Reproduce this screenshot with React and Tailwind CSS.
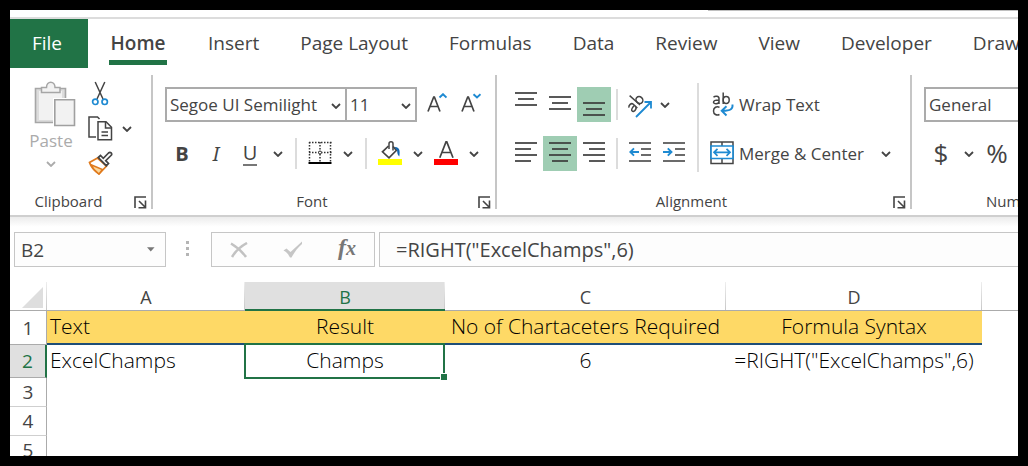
import React from "react";

const TABS = ["Home", "Insert", "Page Layout", "Formulas", "Data", "Review", "View", "Developer", "Draw"];

function Chevron({ className = "" }) {
  return (
    <svg width="10" height="6" viewBox="0 0 10 6" fill="none" stroke="currentColor" strokeWidth="1.8" className={className} aria-hidden="true">
      <path d="M1 1l4 4 4-4" />
    </svg>
  );
}

function Tool({ label, active, children }) {
  return (
    <button type="button" aria-label={label} aria-pressed={active ? true : undefined} className={`flex h-[35px] w-[34px] shrink-0 items-center justify-center ${active ? "bg-[#9fcdb3]" : ""}`}>
      {children}
    </button>
  );
}

function More({ label }) {
  return (
    <button type="button" aria-label={label} className="flex h-[35px] w-[22px] shrink-0 items-center justify-center">
      <Chevron />
    </button>
  );
}

function Rule({ className = "" }) {
  return <div className={`h-[31px] w-0.5 shrink-0 bg-[#dcdcdc] ${className}`} />;
}

function Launcher({ label }) {
  return (
    <button type="button" aria-label={label} className="absolute right-1 bottom-0">
      <svg width="13" height="13" viewBox="0 0 13 13" fill="none" stroke="#444" strokeWidth="1.6" aria-hidden="true">
        <path d="M1 12V1h11" />
        <path d="M5 5l6 6M11.5 4.500v7.200H4.500" />
      </svg>
    </button>
  );
}

function Group({ name, className = "", launcher = true, children }) {
  return (
    <section aria-label={name} className={`relative flex h-[134px] shrink-0 flex-col border-r-2 border-[#c6c6c6] ${className}`}>
      <div className="flex-1">{children}</div>
      <div className={`text-center text-[15px] leading-4 ${launcher ? "pr-6" : ""}`}>{name}</div>
      {launcher && <Launcher label={`${name} settings`} />}
    </section>
  );
}

function Combo({ label, value, className }) {
  return (
    <div className={`relative h-[35px] border-2 border-[#ababab] ${className}`}>
      <select aria-label={label} defaultValue={value} className="h-full w-full appearance-none bg-white pl-[3px] text-[17px] text-[#444] outline-none">
        <option>{value}</option>
      </select>
      <Chevron className="pointer-events-none absolute top-3.5 right-1" />
    </div>
  );
}

function Lines({ rows }) {
  return (
    <svg width="22" height="25" viewBox="0 0 22 25" stroke="#3b3b3b" strokeWidth="1.7" aria-hidden="true">
      {rows.map(([x1, x2, y]) => (
        <path key={y} d={`M${x1} ${y}H${x2}`} />
      ))}
    </svg>
  );
}

function PasteIcon() {
  return (
    <svg width="42" height="46" viewBox="0 0 42 46" fill="none" aria-hidden="true">
      <path d="M1.500 7.500h30v34h-30z" fill="#dcdcdc" stroke="#a6a6a6" strokeWidth="1.600" />
      <path d="M5 10h23v29H5z" fill="#f2f2f2" />
      <path d="M7.500 11.500v-5h5c0-7 8.500-7 8.500 0h5v5z" fill="#f2f2f2" stroke="#a6a6a6" strokeWidth="1.500" />
      <path d="M19 17h23v29H19z" fill="#fff" />
      <path d="M20.800 18.800h19.700v25.700H20.800z" fill="#f2f2f2" stroke="#a0a0a0" strokeWidth="1.600" />
    </svg>
  );
}

function CutIcon() {
  return (
    <svg width="18" height="25" viewBox="0 0 18 25" fill="none" aria-hidden="true">
      <path d="M4.200 1l7.800 17M13.800 1L6 18" stroke="#444" strokeWidth="1.500" />
      <circle cx="4.300" cy="20.800" r="2.700" stroke="#1e8ad2" strokeWidth="1.700" />
      <circle cx="13.700" cy="20.800" r="2.700" stroke="#1e8ad2" strokeWidth="1.700" />
    </svg>
  );
}

function CopyIcon() {
  return (
    <svg width="25" height="25" viewBox="0 0 25 25" fill="none" stroke="#444" strokeWidth="1.500" aria-hidden="true">
      <path d="M8 21H1V1h8.500l2 2" />
      <path d="M10 5.800h8l5.500 5.500v12.500H10z" fill="#fff" />
      <path d="M17.500 6v6h6M13.500 16h6.500M13.500 19.500h6.500" />
    </svg>
  );
}

function BrushIcon() {
  return (
    <svg width="25" height="25" viewBox="0 0 25 25" fill="none" aria-hidden="true">
      <path d="M9.500 7L1.500 11.500C3 16 6.500 20 11 23l7.500-8z" fill="#fff" stroke="#e07a1c" strokeWidth="1.700" />
      <path d="M3 13.800l11.500 4.700L11 23c-3.500-2.500-6.200-5.500-8-9.200z" fill="#fbd79b" stroke="#e07a1c" strokeWidth="1.500" />
      <path d="M10.300 6.500l2.200-2 2.800 2.800L20.500 2c2-1.800 4.200.8 2.500 2.500l-5.300 5.200 2.800 2.800-2.200 2.200z" fill="#fff" stroke="#444" strokeWidth="1.700" />
    </svg>
  );
}

function BordersIcon() {
  return (
    <svg width="24" height="25" viewBox="0 0 24 25" fill="none" stroke="#333" aria-hidden="true">
      <path d="M1 1.500h23M1 11.500h23" strokeWidth="1.500" strokeDasharray="1.500 1.500" />
      <path d="M1.500 1v20M12 1v20M22.500 1v20" strokeWidth="1.500" strokeDasharray="1.500 1.500" />
      <circle cx="12" cy="11.500" r="1.500" fill="#fff" strokeWidth="1" />
      <path d="M.5 22h23" stroke="#000" strokeWidth="2" />
    </svg>
  );
}

function FillIcon() {
  return (
    <svg width="24" height="25" viewBox="0 0 24 25" fill="none" aria-hidden="true">
      <path d="M10.500 5L4.500 10.800l6.500 6 7.500-7.500L15 5.500" stroke="#444" strokeWidth="1.700" />
      <path d="M11 8V2.800c0-2.600 4-2.600 4 0V9.500" stroke="#444" strokeWidth="1.500" />
      <path d="M16.500 6c4.500-.5 6 3 4.800 9.500-1.800-1.500-2-3.500-2.200-6z" fill="#1167b1" />
      <path d="M0 18h24v6H0z" fill="#ff0" />
    </svg>
  );
}

function FontColorIcon() {
  return (
    <svg width="24" height="25" viewBox="0 0 24 25" fill="none" aria-hidden="true">
      <path d="M5.800 16.800L12 .9h.8l6.200 15.900M8 11.500h9" stroke="#444" strokeWidth="1.700" />
      <path d="M0 18h24v6H0z" fill="#f00" />
    </svg>
  );
}

function SizeIcon({ down }) {
  return (
    <svg width="20" height="23" viewBox="0 0 20 23" fill="none" aria-hidden="true">
      <path d="M1 18.500L6.700 4h.7L13 18.500M3 13.500h8.200" stroke="#444" strokeWidth="1.700" />
      <path d={down ? "M12.500 1.200l3.500 3.300 3.500-3.300" : "M12.500 4.500L16 1.200l3.500 3.300"} stroke="#1e8ad2" strokeWidth="1.900" />
    </svg>
  );
}

function OrientationIcon() {
  return (
    <svg width="26" height="26" viewBox="0 0 26 26" fill="none" aria-hidden="true">
      <g transform="rotate(-48 9 10)" stroke="#444" strokeWidth="1.500">
        <path d="M0 8.500c1.500-1.800 5.500-1.800 5.500 1V15M5.500 11c-3 0-5.800.2-5.800 2.200 0 2.500 5.800 2.200 5.800-1" />
        <path d="M9.500 1V15" />
        <ellipse cx="12.800" cy="11.200" rx="3.200" ry="3.600" />
      </g>
      <path d="M9 25L23.500 10.500M17.500 10h6.500v6.500" stroke="#1e8ad2" strokeWidth="1.800" />
    </svg>
  );
}

function IndentIcon({ increase }) {
  return (
    <svg width="22" height="25" viewBox="0 0 22 25" fill="none" aria-hidden="true">
      <path d="M0 2h22M12 8h10M12 14h10M0 20h22" stroke="#3b3b3b" strokeWidth="1.700" />
      <path d={increase ? "M0 11h8M4.800 7.300L8.500 11l-3.700 3.700" : "M1.500 11H10M5 7.300L1.300 11 5 14.700"} stroke="#1e8ad2" strokeWidth="1.900" />
    </svg>
  );
}

function WrapIcon() {
  return (
    <svg width="24" height="25" viewBox="0 0 24 25" fill="none" aria-hidden="true">
      <g stroke="#444" strokeWidth="1.500">
        <path d="M3.500 5.200C5 3.800 9 3.800 9 6.500V12M9 8c-2.800 0-5.500.3-5.500 2.200 0 2.200 5.500 2 5.500-.7" />
        <path d="M13.200.5V12" />
        <ellipse cx="16.200" cy="8" rx="3" ry="3.400" />
        <path d="M9.500 15.300c-2.800-1.500-6 .2-6 3.600s3.200 5 6 3.600" />
      </g>
      <path d="M22.500 12.500c.5 4-1.500 6.300-10 6.300M16.500 14.200l-4.800 4.600 4.800 4.700" stroke="#1e8ad2" strokeWidth="1.900" />
    </svg>
  );
}

function MergeIcon() {
  return (
    <svg width="24" height="25" viewBox="0 0 24 25" fill="none" aria-hidden="true">
      <path d="M1 1h22v21.500H1zM12 1v4M12 18v4" stroke="#444" strokeWidth="1.500" />
      <path d="M1 5h22v12.500H1z" fill="#fff" stroke="#1e8ad2" strokeWidth="1.700" />
      <path d="M4 11.300h16M7.500 7.800L4 11.300l3.500 3.500M16.500 7.800l3.500 3.500-3.500 3.500" stroke="#1e8ad2" strokeWidth="1.700" />
    </svg>
  );
}

function Ribbon() {
  return (
    <div className="flex overflow-hidden border-b-2 border-[#cfcfcf] pt-[7px] pb-1.5 text-[#444]">
      <Group name="Clipboard" className="w-[143px]">
        <div className="flex gap-[5px] pt-1.5 pl-3.5">
          <button type="button" className="flex w-[54px] flex-col items-center text-[#ababab]">
            <span className="pl-2">
              <PasteIcon />
            </span>
            <span className="text-[17px] leading-7">Paste</span>
            <Chevron className="mt-1.5" />
          </button>
          <div className="flex flex-col gap-2.5">
            <button type="button" aria-label="Cut" className="flex h-[25px] w-[34px] items-center justify-center">
              <CutIcon />
            </button>
            <div className="flex">
              <button type="button" aria-label="Copy" className="flex h-[25px] w-[34px] items-center justify-center">
                <CopyIcon />
              </button>
              <button type="button" aria-label="Copy options" className="flex h-[25px] w-5 items-center justify-center">
                <Chevron />
              </button>
            </div>
            <button type="button" aria-label="Format Painter" className="flex h-[25px] w-[34px] items-center justify-center">
              <BrushIcon />
            </button>
          </div>
        </div>
      </Group>

      <Group name="Font" className="w-[344px]">
        <div className="flex flex-col gap-3.5 pt-3 pl-3">
          <div className="flex">
            <Combo label="Font name" value="Segoe UI Semilight" className="w-[182px]" />
            <Combo label="Font size" value="11" className="-ml-0.5 w-[72px]" />
            <div className="flex pl-[3px]">
              <Tool label="Increase font size">
                <SizeIcon />
              </Tool>
              <Tool label="Decrease font size">
                <SizeIcon down />
              </Tool>
            </div>
          </div>
          <div className="flex items-center">
            <Tool label="Bold">
              <span className="text-xl font-bold">B</span>
            </Tool>
            <Tool label="Italic">
              <span className="font-['Noto_Sans',sans-serif] text-xl italic">I</span>
            </Tool>
            <Tool label="Underline">
              <span className="border-b-2 border-[#777] text-xl leading-[22px]">U</span>
            </Tool>
            <More label="Underline options" />
            <Rule className="mx-1.5" />
            <Tool label="Borders">
              <BordersIcon />
            </Tool>
            <More label="Border options" />
            <Rule className="mx-1.5" />
            <Tool label="Fill color">
              <FillIcon />
            </Tool>
            <More label="Fill color options" />
            <Tool label="Font color">
              <FontColorIcon />
            </Tool>
            <More label="Font color options" />
          </div>
        </div>
      </Group>

      <Group name="Alignment" className="w-[415px]">
        <div className="flex pt-3 pl-3">
          <div className="flex flex-col gap-3.5">
            <div className="flex items-center">
              <Tool label="Top align">
                <Lines rows={[[0, 22, 1], [3, 19, 7], [0, 22, 13]]} />
              </Tool>
              <Tool label="Middle align">
                <Lines rows={[[0, 22, 5], [3, 19, 11], [0, 22, 17]]} />
              </Tool>
              <Tool label="Bottom align" active>
                <Lines rows={[[0, 22, 11], [3, 19, 17], [0, 22, 23]]} />
              </Tool>
              <Rule className="mx-[5px]" />
              <Tool label="Orientation">
                <OrientationIcon />
              </Tool>
              <button type="button" aria-label="Orientation options" className="flex h-[35px] w-4 items-center justify-center">
                <Chevron />
              </button>
            </div>
            <div className="flex items-center">
              <Tool label="Align left">
                <Lines rows={[[0, 22, 2], [0, 16, 8], [0, 22, 14], [0, 16, 20]]} />
              </Tool>
              <Tool label="Center" active>
                <Lines rows={[[0, 22, 2], [3, 19, 8], [0, 22, 14], [3, 19, 20]]} />
              </Tool>
              <Tool label="Align right">
                <Lines rows={[[0, 22, 2], [6, 22, 8], [0, 22, 14], [6, 22, 20]]} />
              </Tool>
              <Rule className="mx-[5px]" />
              <Tool label="Decrease indent">
                <IndentIcon />
              </Tool>
              <Tool label="Increase indent">
                <IndentIcon increase />
              </Tool>
            </div>
          </div>
          <div className="-mt-1 ml-1.5 h-[89px] w-0.5 bg-[#dcdcdc]" />
          <div className="flex flex-col gap-3.5 pl-[11px] text-[17px]">
            <button type="button" className="flex h-[35px] items-center gap-[5px]">
              <WrapIcon />
              Wrap Text
            </button>
            <div className="flex">
              <button type="button" className="flex h-[35px] w-[165px] items-center gap-[5px] whitespace-nowrap">
                <MergeIcon />
                Merge &amp; Center
              </button>
              <More label="Merge options" />
            </div>
          </div>
        </div>
      </Group>

      <Group name="Number" className="w-[208px]" launcher={false}>
        <div className="flex flex-col gap-3.5 pt-3 pl-3">
          <Combo label="Number format" value="General" className="w-[190px]" />
          <div className="flex text-[26px]">
            <Tool label="Accounting format">$</Tool>
            <More label="Accounting options" />
            <Tool label="Percent style">%</Tool>
          </div>
        </div>
      </Group>
    </div>
  );
}

function FormulaBar() {
  return (
    <div className="flex h-[65px] bg-linear-to-b from-[#ececec] to-white to-15% pt-[15px] pl-1 text-[#444]">
      <div className="flex h-[35px] w-[152px] shrink-0 items-center border border-[#c6c6c6] bg-[#fdfdfd] pr-2.5">
        <input aria-label="Name box" defaultValue="B2" className="h-full w-full min-w-0 bg-transparent pl-1.5 text-[19px] outline-none" />
        <svg width="8" height="5" viewBox="0 0 8 5" aria-hidden="true">
          <path d="M0 0h8L4 4.500z" fill="#777" />
        </svg>
      </div>
      <div className="ml-5 flex w-[25px] shrink-0 flex-col gap-[3px] pt-[9px]">
        <i className="size-[3px] bg-[#b5b5b5]" />
        <i className="size-[3px] bg-[#b5b5b5]" />
        <i className="size-[3px] bg-[#b5b5b5]" />
      </div>
      <div className="flex h-[35px] w-[164px] shrink-0 items-center border border-[#c6c6c6] bg-[#fdfdfd]">
        <button type="button" aria-label="Cancel" className="flex w-[54px] justify-center">
          <svg width="18" height="16" viewBox="0 0 18 16" fill="none" stroke="#c2c2c2" strokeWidth="2.500" aria-hidden="true">
            <path d="M1 1.500c6 3.500 11 8 15 13.500M17 1C10.500 4.500 5.500 9 2 15" />
          </svg>
        </button>
        <button type="button" aria-label="Enter" className="flex w-[54px] justify-center">
          <svg width="20" height="17" viewBox="0 0 20 17" aria-hidden="true">
            <path d="M.5 9.500l3-2 4 3.500L19 .5V3C14.500 7 11.500 11 8.500 16.500H7C5.500 13.500 3.500 11 .5 9.500z" fill="#c6c6c6" />
          </svg>
        </button>
        <button type="button" aria-label="Insert function" className="w-[54px] pb-1 font-['Liberation_Serif',serif] text-2xl leading-6 font-bold text-[#777] italic">
          f<span className="text-xl">x</span>
        </button>
      </div>
      <input aria-label="Formula" defaultValue={'=RIGHT("ExcelChamps",6)'} className="-mr-px ml-1 h-[35px] min-w-0 flex-1 border border-[#c6c6c6] bg-[#fdfdfd] pl-4 text-xl outline-none" />
    </div>
  );
}

const HEAD = "h-[29px] border-b border-[#ababab] p-0 pt-0.5 text-center text-lg leading-6 font-normal";
const ROW_HEAD = "border-r border-[#ababab] p-0 text-center text-[19px] leading-6 font-normal";
const TITLE = "h-[34px] border-b-2 border-b-[#1f4e78] bg-[#fed966] p-0 pb-0.5 text-center font-light whitespace-nowrap";
const CELL = "h-[33px] p-0 pb-1 text-center font-light whitespace-nowrap";

function EdgeLine() {
  return <span className="absolute top-0 right-0 h-full w-px bg-linear-to-b from-[#eee] to-[#c8c8c8]" />;
}

function Sheet() {
  return (
    <table className="w-full table-fixed border-separate border-spacing-0 text-[21px] leading-6 text-black">
      <colgroup>
        <col className="w-[37px]" />
        <col className="w-[198px]" />
        <col className="w-[200px]" />
        <col className="w-[281px]" />
        <col className="w-[256px]" />
        <col />
      </colgroup>
      <thead className="text-[#444]">
        <tr>
          <th aria-label="Select all" className={`relative ${HEAD}`}>
            <svg width="21" height="21" viewBox="0 0 21 21" className="ml-3" aria-hidden="true">
              <path d="M21 0v21H0z" fill="#dedede" />
            </svg>
            <EdgeLine />
          </th>
          <th scope="col" className={`relative ${HEAD}`}>
            A<EdgeLine />
          </th>
          <th scope="col" className="relative h-[29px] border-b-2 border-[#217346] bg-[#e0e0e0] p-0 pt-0.5 text-center text-lg leading-6 font-normal text-[#217346]">
            B<EdgeLine />
          </th>
          <th scope="col" className={`relative ${HEAD}`}>
            C<EdgeLine />
          </th>
          <th scope="col" className={`relative ${HEAD}`}>
            D<EdgeLine />
          </th>
          <th className={HEAD} />
        </tr>
      </thead>
      <tbody>
        <tr>
          <th scope="row" className={`${ROW_HEAD} border-b border-b-[#ababab] text-[#444]`}>1</th>
          <td className="h-[34px] border-b-2 border-b-[#1f4e78] bg-[#fed966] p-0 pb-0.5 pl-[3px] font-light">Text</td>
          <td className={TITLE}>Result</td>
          <td className={TITLE}>No of Chartaceters Required</td>
          <td className={TITLE}>Formula Syntax</td>
          <td />
        </tr>
        <tr>
          <th scope="row" className="border-r-2 border-b border-r-[#217346] border-b-[#ababab] bg-[#e0e0e0] p-0 text-center text-[19px] leading-6 font-normal text-[#217346]">2</th>
          <td className="h-[33px] p-0 pb-1 pl-[3px] font-light">ExcelChamps</td>
          <td className={`relative ${CELL}`}>
            Champs
            <span className="absolute -top-0.5 right-0 -bottom-px -left-px border-2 border-[#217346]" />
            <span className="absolute -right-0.5 -bottom-0.5 size-[7px] border-t border-l border-white bg-[#217346]" />
          </td>
          <td className={CELL}>6</td>
          <td className={CELL}>=RIGHT(&quot;ExcelChamps&quot;,6)</td>
          <td />
        </tr>
        {[3, 4, 5].map((n) => (
          <tr key={n} className="h-[29px]">
            <th scope="row" className={`${ROW_HEAD} border-b border-b-[#cfcfcf] text-[#444]`}>{n}</th>
            <td colSpan={5} />
          </tr>
        ))}
      </tbody>
    </table>
  );
}

export default function App() {
  return (
    <main className="h-screen overflow-hidden border-10 border-black bg-white font-['Open_Sans','Noto_Sans',sans-serif]">
      <div className="flex h-[9px] justify-end border-b-2 border-[#dcdcdc]">
        <div className="h-px w-[310px] bg-[#c0c0c0]" />
      </div>
      <nav aria-label="Ribbon tabs" className="flex h-[49px] gap-[41px] overflow-hidden text-[19px] text-[#444]">
        <button type="button" className="-mr-5 w-[78px] shrink-0 bg-[#217346] pr-1 text-white">
          File
        </button>
        {TABS.map((tab, i) => (
          <a key={tab} href={`#${tab}`} className={`flex h-[46px] shrink-0 items-center justify-center border-b-5 pt-2 whitespace-nowrap ${i === 0 ? "min-w-[58px] border-[#217346] font-semibold" : "border-transparent"}`}>
            {tab}
          </a>
        ))}
      </nav>
      <Ribbon />
      <FormulaBar />
      <Sheet />
    </main>
  );
}
